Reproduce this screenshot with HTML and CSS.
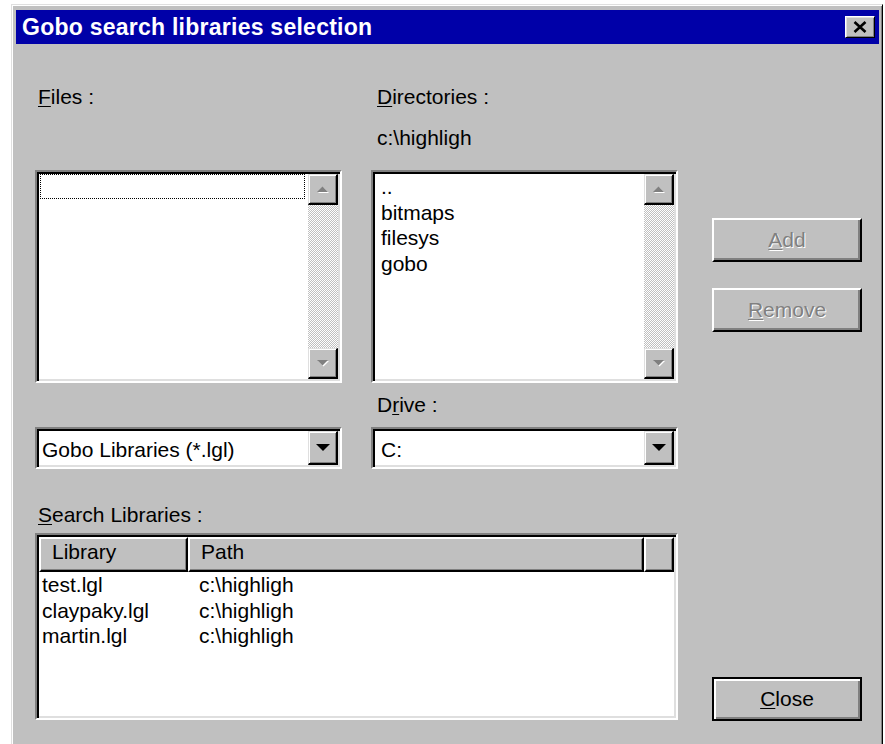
FILE: index.html
```html
<!DOCTYPE html>
<html lang="en">
<head>
<meta charset="utf-8">
<title>Gobo search libraries selection</title>
<link rel="stylesheet" href="styles.css">
</head>
<body>
<div class="window">
  <div class="titlebar">
    <span class="title">Gobo search libraries selection</span>
    <span class="title-close">
      <svg width="14" height="12" viewBox="0 0 14 12"><path d="M1.5 1 L12.5 11 M12.5 1 L1.5 11" stroke="#000" stroke-width="2.6" fill="none"/></svg>
    </span>
  </div>

  <div class="client">
    <div class="label col1 row1"><u>F</u>iles :</div>
    <div class="label col2 row1"><u>D</u>irectories :</div>
    <div class="label col2 row2 cwd">c:\highligh</div>

    <div class="listbox col1">
      <div class="list-items">
        <div class="focus-row"></div>
      </div>
      <div class="vscroll">
        <span class="sbtn"><svg width="14" height="9" viewBox="0 0 14 9"><polygon points="2,8 13,8 7.5,2.5" fill="#fff"/><polygon points="1,7 12,7 6.5,1.5" fill="#808080"/></svg></span>
        <span class="track"></span>
        <span class="sbtn"><svg width="14" height="9" viewBox="0 0 14 9"><polygon points="2,2 13,2 7.5,7.5" fill="#fff"/><polygon points="1,1 12,1 6.5,6.5" fill="#808080"/></svg></span>
      </div>
    </div>

    <div class="listbox col2">
      <div class="list-items dirs">
        <div class="item">..</div>
        <div class="item">bitmaps</div>
        <div class="item">filesys</div>
        <div class="item">gobo</div>
      </div>
      <div class="vscroll">
        <span class="sbtn"><svg width="14" height="9" viewBox="0 0 14 9"><polygon points="2,8 13,8 7.5,2.5" fill="#fff"/><polygon points="1,7 12,7 6.5,1.5" fill="#808080"/></svg></span>
        <span class="track"></span>
        <span class="sbtn"><svg width="14" height="9" viewBox="0 0 14 9"><polygon points="2,2 13,2 7.5,7.5" fill="#fff"/><polygon points="1,1 12,1 6.5,6.5" fill="#808080"/></svg></span>
      </div>
    </div>

    <div class="label col2 row4">D<u>r</u>ive :</div>

    <div class="combo col1">
      <span class="combo-text">Gobo Libraries (*.lgl)</span>
      <span class="combo-btn"><svg width="14" height="8" viewBox="0 0 14 8"><polygon points="0,0 14,0 7,7" fill="#000"/></svg></span>
    </div>
    <div class="combo col2">
      <span class="combo-text drive">C:</span>
      <span class="combo-btn"><svg width="14" height="8" viewBox="0 0 14 8"><polygon points="0,0 14,0 7,7" fill="#000"/></svg></span>
    </div>

    <div class="label col1 row6"><u>S</u>earch Libraries :</div>

    <div class="listview">
      <div class="lv-head">
        <span class="hcell h-lib">Library</span>
        <span class="hcell h-path">Path</span>
        <span class="hcell h-fill"></span>
      </div>
      <div class="lv-row"><span>test.lgl</span><span>c:\highligh</span></div>
      <div class="lv-row"><span>claypaky.lgl</span><span>c:\highligh</span></div>
      <div class="lv-row"><span>martin.lgl</span><span>c:\highligh</span></div>
    </div>

    <div class="buttons">
      <span class="btn disabled"><u>A</u>dd</span>
      <span class="btn disabled remove"><u>R</u>emove</span>
      <span class="btn default close"><u>C</u>lose</span>
    </div>
  </div>
</div>
</body>
</html>
```

FILE: styles.css
```css
* {
  box-sizing: border-box;
}

html,
body {
  margin: 0;
}

body {
  width: 885px;
  height: 744px;
  overflow: hidden;
  background: #fff;
  color: #000;
  font-family: "Liberation Sans", Arial, sans-serif;
  font-size: 21px;
  line-height: 26px;
}

u {
  text-decoration: underline;
  text-underline-offset: 2px;
  text-decoration-thickness: 1px;
}

/* dialog frame */
.window {
  margin: 4px 0 0 11px;
  width: 872px;
  height: 760px;
  background: #c0c0c0;
  border: 1px solid;
  border-color: #dfdfdf #000 #000 #dfdfdf;
  box-shadow: inset 1px 1px 0 #fff, inset -1px -1px 0 #808080;
  padding: 5px 3px 0 4px;
}

.titlebar {
  height: 34px;
  background: #0000a8;
  display: flex;
  align-items: center;
  justify-content: space-between;
  padding: 0 4px 0 6px;
}

.title {
  color: #fff;
  font-weight: bold;
  font-size: 23px;
  letter-spacing: 0.25px;
  line-height: 34px;
  white-space: nowrap;
}

.title-close {
  width: 30px;
  height: 22px;
  background: #c0c0c0;
  border: 1px solid;
  border-color: #fff #000 #000 #fff;
  box-shadow: inset 1px 1px 0 #dfdfdf, inset -1px -1px 0 #808080;
  display: flex;
  align-items: center;
  justify-content: center;
}

/* dialog body layout */
.client {
  padding: 40px 0 0 19px;
  display: grid;
  grid-template-columns: 307px 307px 155px;
  grid-template-rows: 26px 41px 232px 35px 51px 59px 192px;
  column-gap: 29px;
}

.col1 {
  grid-column: 1;
}

.col2 {
  grid-column: 2;
}

.label {
  white-space: nowrap;
  line-height: 26px;
}

.label.col1 {
  padding-left: 3px;
}

.label.col2 {
  padding-left: 6px;
}

.row1 {
  grid-row: 1;
}

.row2 {
  grid-row: 2;
  align-self: end;
}

.row4 {
  grid-row: 4;
  align-self: end;
}

.row6 {
  grid-row: 6;
  align-self: end;
}

/* sunken white fields */
.listbox,
.combo,
.listview {
  background: #fff;
  border: 2px solid;
  border-color: #808080 #fff #fff #808080;
  box-shadow: inset 2px 2px 0 #000, inset -2px -2px 0 #dfdfdf;
  padding: 2px;
}

.listbox {
  grid-row: 3;
  margin-top: 19px;
  height: 213px;
  display: flex;
}

.list-items {
  flex: 1;
}

.focus-row {
  height: 25px;
  margin: 0 3px 0 1px;
  border: 1px dotted #000;
}

.dirs .item {
  padding-left: 6px;
  line-height: 25.5px;
  white-space: nowrap;
}

/* vertical scrollbar */
.vscroll {
  width: 30px;
  display: flex;
  flex-direction: column;
}

.sbtn {
  height: 31px;
  background: #c0c0c0;
  border-style: solid;
  border-width: 1px 2px 2px 1px;
  border-color: #dfdfdf #000 #000 #dfdfdf;
  box-shadow: inset 1px 1px 0 #fff, inset -1px -1px 0 #808080;
  display: flex;
  align-items: center;
  justify-content: center;
}

.track {
  flex: 1;
  background-image: conic-gradient(#fff 25%, #c0c0c0 0 50%, #fff 0 75%, #c0c0c0 0);
  background-size: 2px 2px;
}

/* drop-down combos */
.combo {
  grid-row: 5;
  margin-top: 9px;
  height: 42px;
  display: flex;
}

.combo-text {
  flex: 1;
  align-self: center;
  padding: 3px 0 0 3px;
  white-space: nowrap;
}

.combo-text.drive {
  padding-left: 6px;
}

.combo-btn {
  width: 30px;
  background: #c0c0c0;
  border-style: solid;
  border-width: 1px 2px 2px 1px;
  border-color: #dfdfdf #000 #000 #dfdfdf;
  box-shadow: inset 1px 1px 0 #fff, inset -1px -1px 0 #808080;
  display: flex;
  align-items: center;
  justify-content: center;
}

/* search libraries list view */
.listview {
  grid-column: 1 / 3;
  grid-row: 7;
  margin-top: 5px;
  height: 187px;
}

.lv-head {
  display: flex;
  height: 35px;
}

.hcell {
  background: #c0c0c0;
  border: 2px solid;
  border-color: #fff #000 #000 #fff;
  box-shadow: inset -1px -1px 0 #808080;
  padding-left: 11px;
  line-height: 26px;
  white-space: nowrap;
}

.h-lib {
  width: 149px;
}

.h-path {
  width: 456px;
}

.h-fill {
  flex: 1;
}

.lv-row {
  display: grid;
  grid-template-columns: 149px 456px;
  line-height: 25.5px;
  white-space: nowrap;
}

.lv-row span:first-child {
  padding-left: 3px;
}

.lv-row span:last-child {
  padding-left: 11px;
}

/* push buttons */
.buttons {
  grid-column: 3;
  grid-row: 1 / -1;
  display: flex;
  flex-direction: column;
  padding: 134px 0 0 5px;
}

.btn {
  width: 150px;
  height: 44px;
  background: #c0c0c0;
  border: 2px solid;
  border-color: #fff #000 #000 #fff;
  box-shadow: inset -2px -2px 0 #808080;
  display: flex;
  align-items: center;
  justify-content: center;
  white-space: nowrap;
}

.btn.disabled {
  color: #808080;
  text-shadow: 1px 1px 0 #fff;
}

.btn.remove {
  margin-top: 26px;
}

.btn.default {
  border-color: #000;
  box-shadow: inset 2px 2px 0 #fff, inset -2px -2px 0 #808080;
}

.btn.close {
  margin-top: auto;
  margin-bottom: -1px;
}
```
